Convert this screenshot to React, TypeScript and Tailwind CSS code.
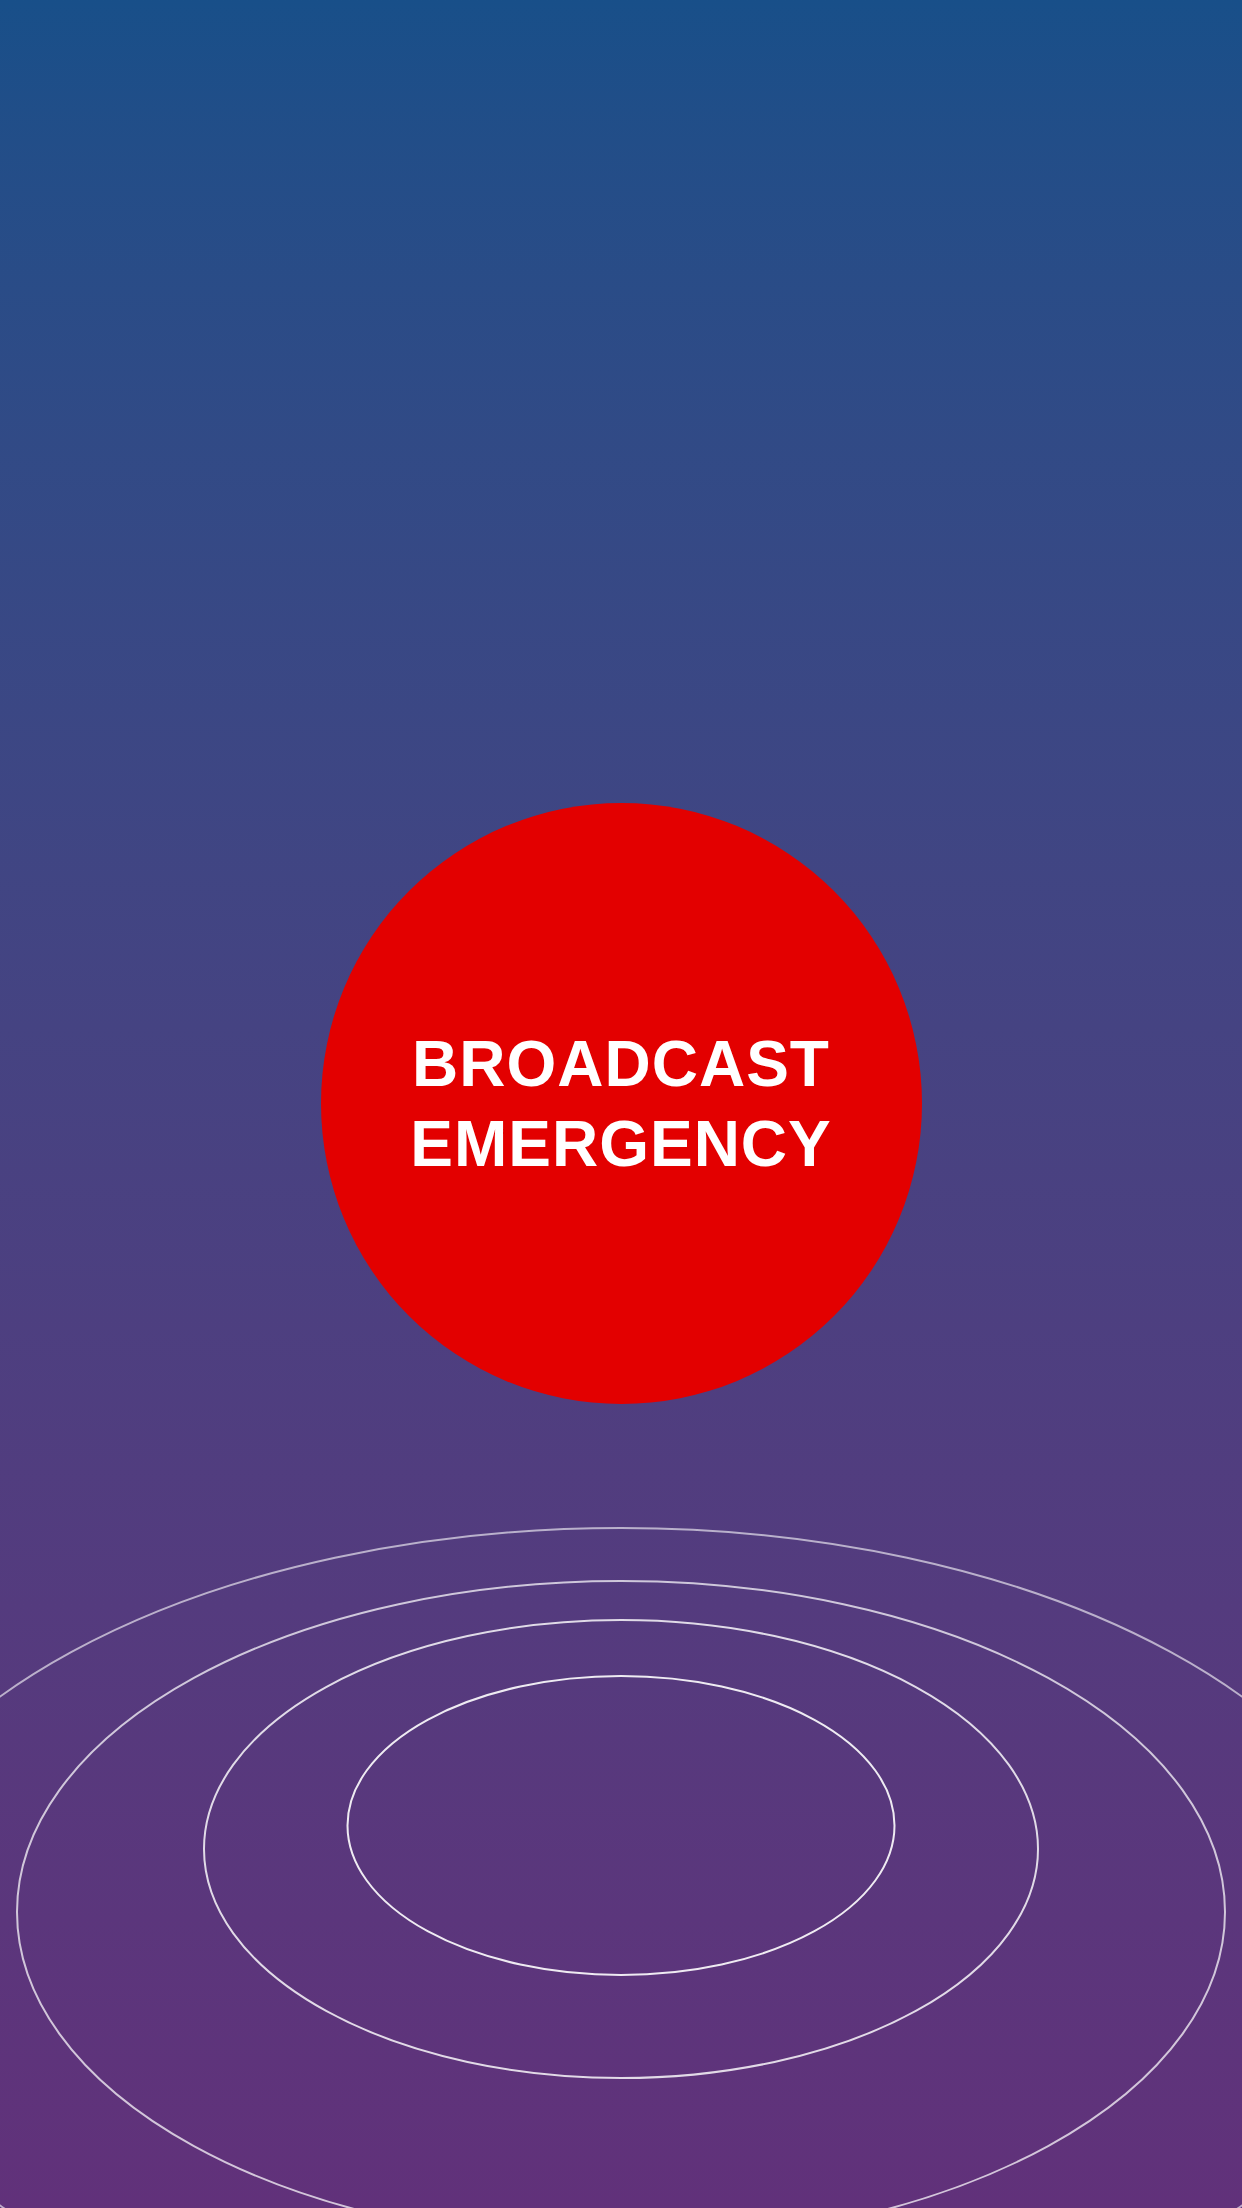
const RINGS = [
  { cy: 1951, rx: 777, ry: 423, o: 0.6 },
  { cy: 1912, rx: 604, ry: 331, o: 0.72 },
  { cy: 1849, rx: 417, ry: 229, o: 0.82 },
  { cy: 1825.5, rx: 273.5, ry: 149.5, o: 0.9 },
]

function Rings() {
  return (
    <svg
      className="pointer-events-none absolute inset-0 h-full w-full"
      viewBox="0 0 1242 2208"
      fill="none"
    >
      {RINGS.map((r) => (
        <ellipse
          key={r.rx}
          cx={621}
          cy={r.cy}
          rx={r.rx}
          ry={r.ry}
          stroke="#ffffff"
          strokeOpacity={r.o}
          strokeWidth={2}
        />
      ))}
    </svg>
  )
}

export default function App() {
  return (
    <div className="relative h-[2208px] w-full overflow-hidden bg-linear-to-b from-[#184f89] to-[#61317a]">
      <Rings />
      <div className="relative flex flex-col items-center pt-[803px]">
        {/* big red button */}
        <button className="flex h-[601px] w-[601px] items-center justify-center rounded-full bg-[#e30000]">
          <span className="font-['Liberation_Sans',Arial,sans-serif] text-[64px] font-bold leading-[80px] tracking-[1px] text-white">
            BROADCAST
            <br />
            EMERGENCY
          </span>
        </button>
      </div>
    </div>
  )
}
